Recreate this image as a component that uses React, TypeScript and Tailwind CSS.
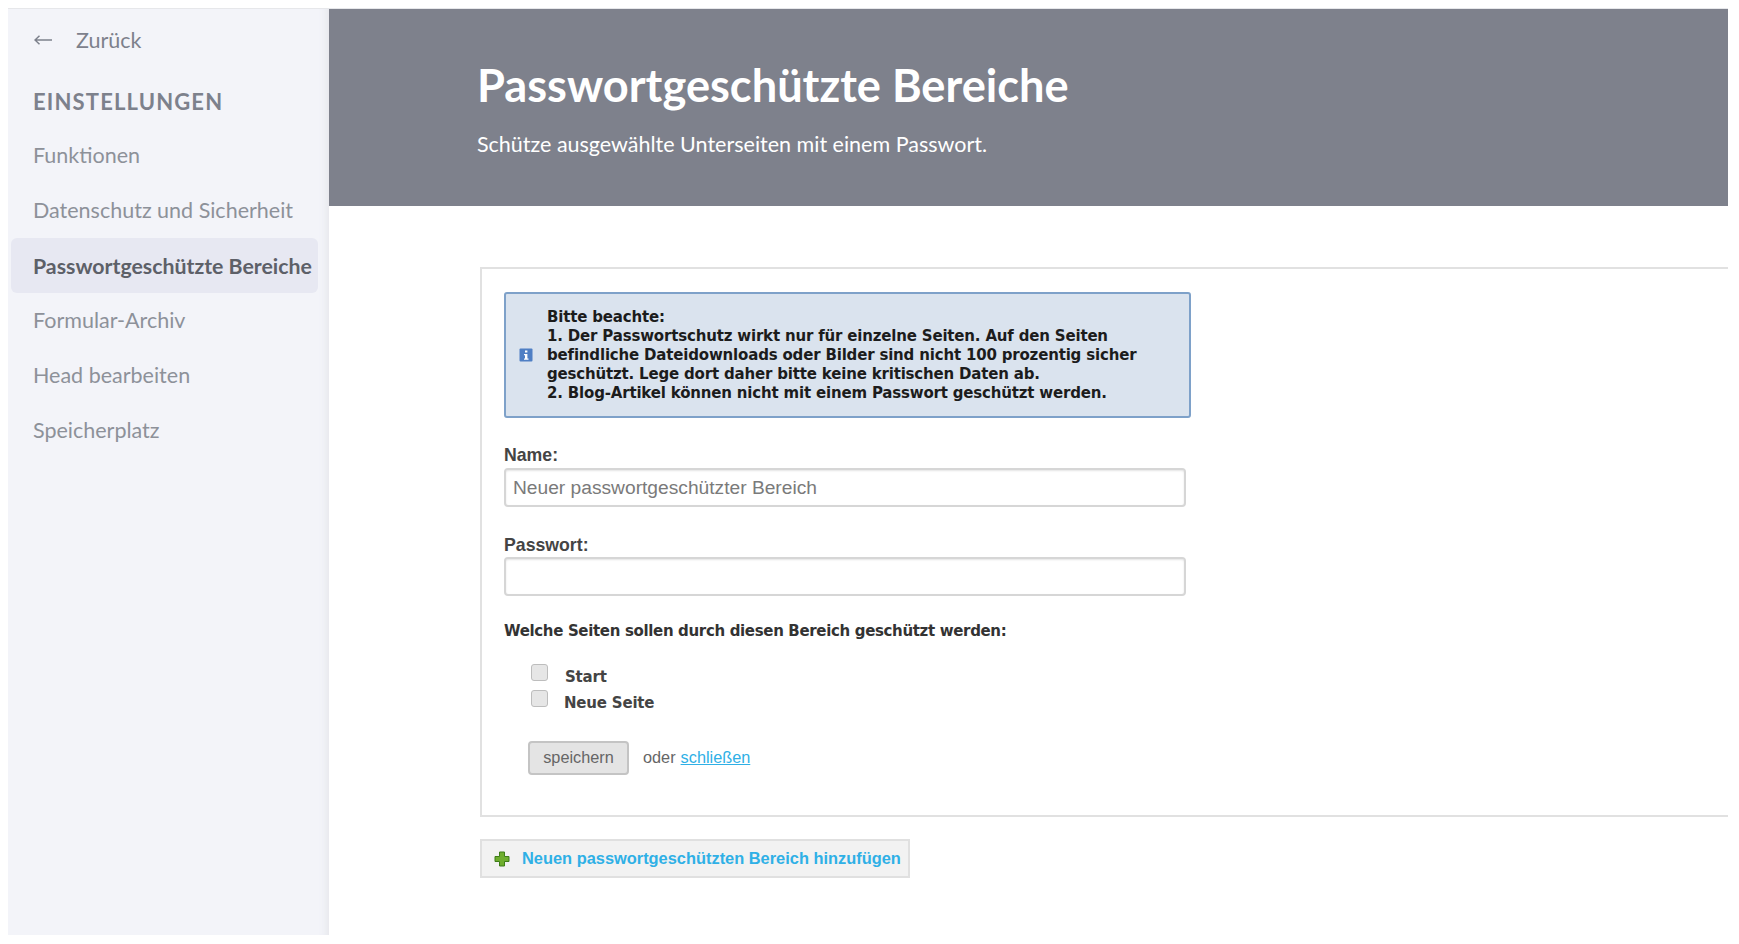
import React from 'react';

const sidebarItems = [
  'Funktionen',
  'Datenschutz und Sicherheit',
  'Passwortgeschützte Bereiche',
  'Formular-Archiv',
  'Head bearbeiten',
  'Speicherplatz',
];

const ACTIVE_ITEM = 'Passwortgeschützte Bereiche';

function BackArrow() {
  return (
    <svg width="18" height="10" viewBox="0 0 18 10" fill="none" stroke="currentColor" strokeWidth="1.5" className="shrink-0">
      <path d="M1 5H18M5.500 0.800L1 5L5.500 9.200" />
    </svg>
  );
}

function InfoIcon() {
  return (
    <svg width="14" height="14" viewBox="0 0 14 14" className="shrink-0">
      <rect x="0.5" y="0.5" width="13" height="13" rx="1" fill="#4f7fc4" />
      <rect x="6" y="2.5" width="2.4" height="2" fill="#fff" />
      <path d="M5 6h3.4v4.6H9.500v1.200H5v-1.200h1V7.200H5z" fill="#fff" />
    </svg>
  );
}

function PlusIcon() {
  return (
    <svg width="16" height="16" viewBox="0 0 16 16" className="shrink-0">
      <path
        d="M5.500 1h5v4.500H15v5h-4.500V15h-5v-4.500H1v-5h4.500z"
        fill="#6fae2e"
        stroke="#3f7d18"
        strokeWidth="1"
      />
    </svg>
  );
}

export default function App() {
  return (
    <div className="h-[944px] overflow-hidden bg-white pt-2 pl-2 pr-[11px] pb-[9px]">
      <div className="flex h-full border-t border-[#e6e7ea]">
        <aside className="w-[321px] shrink-0 bg-[#f3f4f9] shadow-[inset_-10px_0_8px_-8px_#e4e5ea] font-['Lato',sans-serif]">
          <div className="flex items-center pl-[26px] pt-[18px] h-[44px] text-[#7d818c]">
            <BackArrow />
            <span className="ml-[24px] text-[21.500px]">Zurück</span>
          </div>
          <h3 className="mt-[34px] ml-[25px] text-[22px] font-bold tracking-[1.150px] leading-[30px] text-[#7d818c]">
            EINSTELLUNGEN
          </h3>
          <nav className="mt-[11px] flex flex-col pl-[3px] pr-[11px]">
            {sidebarItems.map((item) => (
              <a
                key={item}
                className={
                  item === ACTIVE_ITEM
                    ? 'h-[55px] flex items-center pl-[22px] pt-[2px] rounded-md bg-[#e7e8f2] text-[21.300px] font-bold text-[#5d6068] whitespace-nowrap'
                    : 'h-[55px] flex items-center pl-[22px] text-[21.500px] text-[#8d9199] whitespace-nowrap'
                }
              >
                {item}
              </a>
            ))}
          </nav>
        </aside>

        <main className="flex-1 min-w-0">
          <header className="h-[197px] bg-[#7e818c] pl-[148px] pt-[48px] font-['Lato',sans-serif] text-white">
            <h1 className="text-[45.200px] leading-[56px] font-bold">Passwortgeschützte Bereiche</h1>
            <p className="mt-[17px] text-[21.500px] leading-[28px]">
              Schütze ausgewählte Unterseiten mit einem Passwort.
            </p>
          </header>

          <div className="ml-[151px] mt-[61px]">
            <section className="h-[550px] border-2 border-r-0 border-[#e1e1e1] pl-[22px] pt-[23px]">
              <div className="flex w-[687px] h-[126px] items-center gap-[14px] rounded-[3px] border-2 border-[#7ea1c9] bg-[#dae3ee] pl-[13px] font-['DejaVu_Sans',sans-serif] text-[15px] tracking-[-0.18px] leading-[19px] font-bold text-[#1c1c1c]">
                <InfoIcon />
                <p className="whitespace-nowrap">
                  Bitte beachte:
                  <br />
                  1. Der Passwortschutz wirkt nur für einzelne Seiten. Auf den Seiten
                  <br />
                  befindliche Dateidownloads oder Bilder sind nicht 100 prozentig sicher
                  <br />
                  geschützt. Lege dort daher bitte keine kritischen Daten ab.
                  <br />
                  2. Blog-Artikel können nicht mit einem Passwort geschützt werden.
                </p>
              </div>

              <label className="mt-[27px] block font-['Liberation_Sans',sans-serif] text-[17.700px] leading-[20px] font-bold text-[#444]">
                Name:
              </label>
              <input
                className="mt-[3px] block w-[682px] h-[39px] rounded-[4px] border-2 border-[#d6d6d6] bg-white px-[7px] font-['Liberation_Sans',sans-serif] text-[19.200px] shadow-[inset_0_1px_2px_#e4e4e4] placeholder:text-[#7a7a7a]"
                placeholder="Neuer passwortgeschützter Bereich"
                readOnly
              />

              <label className="mt-[28px] block font-['Liberation_Sans',sans-serif] text-[17.700px] leading-[20px] font-bold text-[#444]">
                Passwort:
              </label>
              <input
                className="mt-[2px] block w-[682px] h-[39px] rounded-[4px] border-2 border-[#d6d6d6] bg-white px-[7px] shadow-[inset_0_1px_2px_#e4e4e4]"
                readOnly
              />

              <p className="mt-[25px] font-['DejaVu_Sans',sans-serif] text-[15px] tracking-[-0.34px] leading-[20px] font-bold text-[#333]">
                Welche Seiten sollen durch diesen Bereich geschützt werden:
              </p>

              <div className="mt-[23px] ml-[27px] flex flex-col gap-[9px] font-['DejaVu_Sans',sans-serif] text-[15px] tracking-[-0.2px] font-bold text-[#444]">
                <label className="flex h-[17px] items-center gap-[17px]">
                  <span className="size-[17px] rounded-[3px] border border-[#bdbdbd] bg-[#e6e6e6]" />
                  <span className="relative top-[5px]">Start</span>
                </label>
                <label className="flex h-[17px] items-center gap-[16px]">
                  <span className="size-[17px] rounded-[3px] border border-[#bdbdbd] bg-[#e6e6e6]" />
                  <span className="relative top-[5px]">Neue Seite</span>
                </label>
              </div>

              <div className="mt-[34px] ml-[24px] flex items-center font-['Liberation_Sans',sans-serif] text-[16.300px]">
                <button className="h-[34px] w-[101px] rounded-[4px] border-2 border-[#c4c4c4] bg-[#e4e4e4] pb-[2px] text-[#666]">
                  speichern
                </button>
                <span className="ml-[14px] pb-[2px] text-[#666]">oder</span>
                <a className="ml-[5px] pb-[2px] text-[#2fb0e6] underline">schließen</a>
              </div>
            </section>

            <button className="mt-[22px] flex h-[39px] w-[430px] items-center gap-[12px] border-2 border-[#e0e0e0] bg-[#f2f2f2] pl-[12px] font-['Liberation_Sans',sans-serif] text-[16.400px] font-bold text-[#2fb0e6] whitespace-nowrap">
              <PlusIcon />
              Neuen passwortgeschützten Bereich hinzufügen
            </button>
          </div>
        </main>
      </div>
    </div>
  );
}
